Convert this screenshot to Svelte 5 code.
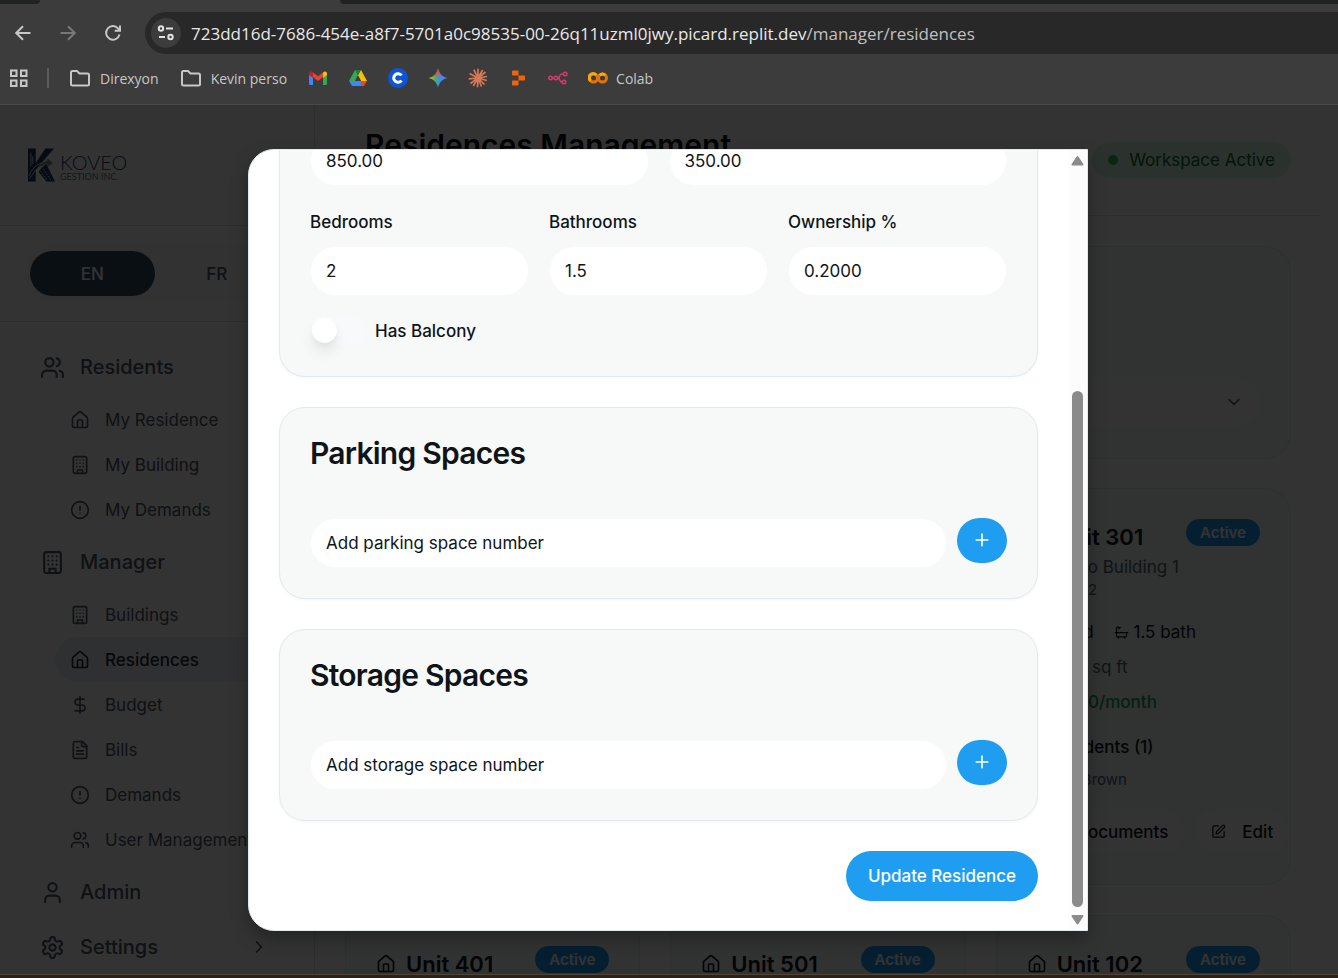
<script>
  const icons = {
    users: '<path d="M16 21v-2a4 4 0 0 0-4-4H6a4 4 0 0 0-4 4v2"/><circle cx="9" cy="7" r="4"/><path d="M22 21v-2a4 4 0 0 0-3-3.87"/><path d="M16 3.13a4 4 0 0 1 0 7.75"/>',
    house: '<path d="M15 21v-8a1 1 0 0 0-1-1h-4a1 1 0 0 0-1 1v8"/><path d="M3 10a2 2 0 0 1 .709-1.528l7-5.999a2 2 0 0 1 2.582 0l7 5.999A2 2 0 0 1 21 10v9a2 2 0 0 1-2 2H5a2 2 0 0 1-2-2z"/>',
    building: '<rect width="16" height="20" x="4" y="2" rx="2"/><path d="M9 22v-4h6v4M8 6h.01M16 6h.01M12 6h.01M12 10h.01M12 14h.01M16 10h.01M16 14h.01M8 10h.01M8 14h.01"/>',
    alert: '<circle cx="12" cy="12" r="10"/><path d="M12 8v4M12 16h.01"/>',
    dollar: '<path d="M12 2v20M17 5H9.5a3.5 3.5 0 0 0 0 7h5a3.5 3.5 0 0 1 0 7H6"/>',
    file: '<path d="M15 2H6a2 2 0 0 0-2 2v16a2 2 0 0 0 2 2h12a2 2 0 0 0 2-2V7Z"/><path d="M14 2v4a2 2 0 0 0 2 2h4M10 9H8M16 13H8M16 17H8"/>',
    user: '<path d="M19 21v-2a4 4 0 0 0-4-4H9a4 4 0 0 0-4 4v2"/><circle cx="12" cy="7" r="4"/>',
    settings: '<path d="M12.22 2h-.44a2 2 0 0 0-2 2v.18a2 2 0 0 1-1 1.73l-.43.25a2 2 0 0 1-2 0l-.15-.08a2 2 0 0 0-2.73.73l-.22.38a2 2 0 0 0 .73 2.73l.15.1a2 2 0 0 1 1 1.72v.51a2 2 0 0 1-1 1.74l-.15.09a2 2 0 0 0-.73 2.73l.22.38a2 2 0 0 0 2.73.73l.15-.08a2 2 0 0 1 2 0l.43.25a2 2 0 0 1 1 1.73V20a2 2 0 0 0 2 2h.44a2 2 0 0 0 2-2v-.18a2 2 0 0 1 1-1.73l.43-.25a2 2 0 0 1 2 0l.15.08a2 2 0 0 0 2.73-.73l.22-.39a2 2 0 0 0-.73-2.73l-.15-.08a2 2 0 0 1-1-1.74v-.5a2 2 0 0 1 1-1.74l.15-.09a2 2 0 0 0 .73-2.73l-.22-.38a2 2 0 0 0-2.73-.73l-.15.08a2 2 0 0 1-2 0l-.43-.25a2 2 0 0 1-1-1.73V4a2 2 0 0 0-2-2z"/><circle cx="12" cy="12" r="3"/>',
    right: '<path d="m9 18 6-6-6-6"/>',
    down: '<path d="m6 9 6 6 6-6"/>',
    bath: '<path d="M10 4 8 6M17 19v2M2 12h20M7 19v2M9 5 7.621 3.621A2.121 2.121 0 0 0 4 5v12a2 2 0 0 0 2 2h12a2 2 0 0 0 2-2v-5"/>',
    pen: '<path d="M12 3H5a2 2 0 0 0-2 2v14a2 2 0 0 0 2 2h14a2 2 0 0 0 2-2v-7"/><path d="M18.375 2.625a1 1 0 0 1 3 3l-9.013 9.014a2 2 0 0 1-.853.505l-2.873.84a.5.5 0 0 1-.62-.62l.84-2.873a2 2 0 0 1 .506-.852z"/>',
    plus: '<path d="M5 12h14M12 5v14"/>'
  };

  const menu = [
    { label: 'Residents', icon: 'users', items: [['My Residence', 'house'], ['My Building', 'building'], ['My Demands', 'alert']] },
    { label: 'Manager', icon: 'building', items: [['Buildings', 'building'], ['Residences', 'house'], ['Budget', 'dollar'], ['Bills', 'file'], ['Demands', 'alert'], ['User Management', 'users']] },
    { label: 'Admin', icon: 'user', items: [] },
    { label: 'Settings', icon: 'settings', items: [], arrow: true }
  ];

  const nextUnits = ['Unit 401', 'Unit 501', 'Unit 102'];

  const spaces = [
    { id: 'parking', title: 'Parking Spaces', hint: 'Add parking space number' },
    { id: 'storage', title: 'Storage Spaces', hint: 'Add storage space number' }
  ];

  const counts = [
    { id: 'bedrooms', label: 'Bedrooms', value: '2' },
    { id: 'bathrooms', label: 'Bathrooms', value: '1.5' },
    { id: 'ownership', label: 'Ownership %', value: '0.2000' }
  ];
</script>

{#snippet icon(name, size)}
  <svg class="icon {size}" viewBox="0 0 24 24" aria-hidden="true">{@html icons[name]}</svg>
{/snippet}

<div class="window">
  <header class="chrome">
    <div class="tabs"><span class="tab-before"></span><span class="tab-active"></span><span class="tab-after"></span></div>
    <div class="toolbar">
      <button class="nav-btn" aria-label="Back"><svg viewBox="0 0 20 20"><path d="M17.500 10H3.500M10 3.200 3.200 10l6.800 6.800" /></svg></button>
      <button class="nav-btn dim" aria-label="Forward"><svg viewBox="0 0 20 20"><path d="M2.500 10h14M10 3.200l6.800 6.800-6.800 6.800" /></svg></button>
      <button class="nav-btn" aria-label="Reload"><svg viewBox="0 0 20 20"><path d="M16.500 11.500A6.800 6.800 0 1 1 15.500 6L17 7.500M17 2.500v5.300h-5.300" /></svg></button>
      <div class="address">
        <button class="site-info" aria-label="Site information"><svg viewBox="0 0 20 20"><circle cx="5" cy="5.500" r="2.200" /><path d="M10 5.500h7M3 14h6" /><circle cx="14.500" cy="14" r="2.200" /></svg></button>
        <span class="url">723dd16d-7686-454e-a8f7-5701a0c98535-00-26q11uzml0jwy.picard.replit.dev<span class="path">/manager/residences</span></span>
      </div>
    </div>
    <nav class="bookmarks" aria-label="Bookmarks">
      <svg class="grid-icon" viewBox="0 0 20 20"><path d="M2 2.500h5.500V8H2zM12 2.500h5.500V8H12zM2 12.500h5.500V18H2zM12 12.500h5.500V18H12z" /></svg>
      <span class="sep"></span>
      <a class="mark folder" href="#direxyon"><svg viewBox="0 0 22 20"><path d="M2 4.500a1.500 1.500 0 0 1 1.500-1.500H8l2.500 2.500h8A1.500 1.500 0 0 1 20 7v9a1.500 1.500 0 0 1-1.500 1.500h-15A1.500 1.500 0 0 1 2 16z" /></svg>Direxyon</a>
      <a class="mark folder" href="#kevin"><svg viewBox="0 0 22 20"><path d="M2 4.500a1.500 1.500 0 0 1 1.500-1.500H8l2.500 2.500h8A1.500 1.500 0 0 1 20 7v9a1.500 1.500 0 0 1-1.500 1.500h-15A1.500 1.500 0 0 1 2 16z" /></svg>Kevin perso</a>
      <a class="mark" href="#mail" aria-label="Gmail"><svg viewBox="0 0 20 20"><path fill="#4285f4" d="M1 6v9.500A1.500 1.500 0 0 0 2.500 17H5V9z" /><path fill="#34a853" d="M15 9v8h2.500a1.500 1.500 0 0 0 1.500-1.500V6z" /><path fill="#ea4335" d="M5 4.500 10 8.300l5-3.800V9l-5 4-5-4z" /><path fill="#c5221f" d="M1 5.500V7l4 3V4.500l-.8-.6C2.800 2.800 1 3.700 1 5.500z" /><path fill="#fbbc04" d="M19 5.500V7l-4 3V4.500l.8-.6C17.200 2.800 19 3.700 19 5.500z" /></svg></a>
      <a class="mark" href="#drive" aria-label="Drive"><svg viewBox="0 0 20 20"><path fill="#34a853" d="M7 2h4l-1 5.500L7 13H1z" /><path fill="#188038" d="M7 2h6l-3 5.500z" /><path fill="#fbbc04" d="M13 2l6 11h-6l-3-5.500z" /><path fill="#4285f4" d="M4 18 1 13h12v5z" /><path fill="#ea4335" d="M13 13h6l-3 5h-3z" /><path fill="#3c3c3c" d="M10 7.500 7 13h6z" /></svg></a>
      <a class="mark" href="#c" aria-label="Coinbase"><svg viewBox="0 0 20 20"><circle cx="10" cy="10" r="10" fill="#0a55dc" /><path d="M13.500 7.500a4.300 4.300 0 1 0 0 5" fill="none" stroke="#fff" stroke-width="3" /></svg></a>
      <a class="mark" href="#gemini" aria-label="Gemini"><svg viewBox="0 0 20 20"><defs><linearGradient id="gem" x1="0" y1="0.500" x2="1" y2="0.500"><stop offset="0" stop-color="#fbbc04" /><stop offset="0.350" stop-color="#4cae6a" /><stop offset="0.600" stop-color="#3f8cf5" /><stop offset="1" stop-color="#3f8cf5" /></linearGradient><linearGradient id="gemtop" x1="0" y1="0" x2="0" y2="1"><stop offset="0.100" stop-color="#f0453a" /><stop offset="0.500" stop-color="#f0453a" stop-opacity="0" /></linearGradient></defs><path fill="url(#gem)" d="M10 .5C11.500 6 14 8.500 19.500 10 14 11.500 11.500 14 10 19.500 8.500 14 6 11.500 .5 10 6 8.500 8.500 6 10 .5z" /><path fill="url(#gemtop)" d="M10 .5C11.500 6 14 8.500 19.500 10 14 11.500 11.500 14 10 19.500 8.500 14 6 11.500 .5 10 6 8.500 8.500 6 10 .5z" /></svg></a>
      <a class="mark" href="#claude" aria-label="Claude"><svg viewBox="0 0 20 20"><path stroke="#d97757" stroke-width="1.700" fill="none" d="M10 10V.8M10 10l4.600-8M10 10l7.500-6M10 10l9-1.500M10 10l8.800 2.500M10 10l6.500 6.500M10 10l3.500 8.500M10 10l-.5 9.300M10 10l-4.700 8M10 10l-7.500 5.500M10 10l-9.300.8M10 10 1.600 5.500M10 10 5.800 1.700" /></svg></a>
      <a class="mark" href="#replit" aria-label="Replit"><svg viewBox="0 0 20 20"><path fill="#f26207" d="M4 3.500a1 1 0 0 1 1-1h4.500a1 1 0 0 1 1 1v4H5a1 1 0 0 1-1-1zM10.500 7.500H16a1 1 0 0 1 1 1v3a1 1 0 0 1-1 1h-5.500zM4 13.500a1 1 0 0 1 1-1h5.500v4a1 1 0 0 1-1 1H5a1 1 0 0 1-1-1z" /></svg></a>
      <a class="mark" href="#n8n" aria-label="n8n"><svg viewBox="0 0 20 20"><g fill="none" stroke="#d83a6c" stroke-width="1.400"><circle cx="2.500" cy="10" r="1.800" /><circle cx="8" cy="10" r="1.800" /><path d="M4.300 10h2M9.800 10c3 0 1-4 4-4h1.500M9.800 10c3 0 1 4 4 4h.5" /><circle cx="17.200" cy="6" r="1.800" /><circle cx="16" cy="14" r="1.800" /></g></svg></a>
      <a class="mark colab" href="#colab"><svg viewBox="0 0 20 20"><g fill="none" stroke-width="3"><circle cx="5.500" cy="10" r="4" stroke="#e8710a" /><circle cx="14.500" cy="10" r="4" stroke="#e8710a" /><path stroke="#f9ab00" d="M8.300 7.200a4 4 0 1 0-5.600 5.600M17.300 7.200a4 4 0 0 0-5.600 0" /></g></svg>Colab</a>
    </nav>
  </header>

  <div class="viewport">
    <div class="app">
      <aside class="sidebar">
        <div class="brand">
          <svg viewBox="0 0 28 34" aria-hidden="true">
            <path fill="#1c3a58" d="M0 0h8v15L18 0h9L15 14l-7 8v12H0z" />
            <path fill="#1c3a58" d="m14 20 5-4 9 18h-9l-8-10z" />
            <path fill="none" stroke="#dde3e8" d="M1 28c4-9 10-14 20-14M2 31c5-9 9-13 17-15M3 4v14M5 8v8" />
            <path fill="none" stroke="#dde3e8" stroke-dasharray="2 1" d="m13 23 7 10M16 21l8 12" />
            <path fill="#7e8f8a" d="m20 10 6 5-6 4v-3l-9 3c3-4 6-6 9-6z" />
          </svg>
          <div class="brand-text"><span class="name">KOVEO</span><span class="sub">GESTION INC.</span></div>
        </div>
        <div class="lang"><div class="lang-box"><button class="on">EN</button><button>FR</button></div></div>
        <nav class="menu" aria-label="Main">
          {#each menu as group}
            <a class="group" href="#{group.label}">{@render icon(group.icon, 'i25')}<span>{group.label}</span>{#if group.arrow}{@render icon('right', 'i20')}{/if}</a>
            {#if group.items.length}
              <div class="items">
                {#each group.items as [label, name]}
                  <a class="item" class:active={label === 'Residences'} href="#{label}">{@render icon(name, 'i20')}<span>{label}</span></a>
                {/each}
              </div>
            {/if}
          {/each}
        </nav>
      </aside>

      <main class="main">
        <div class="page-head">
          <h1>Residences Management</h1>
          <span class="status"><i></i>Workspace Active</span>
        </div>
        <div class="page-body">
          <section class="panel filter"><div class="picker">{@render icon('down', 'i20')}</div></section>
          <div class="units">
            <article class="panel unit full">
              <div class="unit-top"><h3>{@render icon('house', 'i20')}Unit 301</h3><span class="badge">Active</span></div>
              <p class="where">Demo Building 1</p>
              <p class="small floor">Floor 12</p>
              <p class="rooms"><span>2 bed</span><span>{@render icon('bath', 'i15')}1.5 bath</span></p>
              <p class="area">850 sq ft</p>
              <p class="rent">$350.00/month</p>
              <p class="people">Residents (1)</p>
              <p class="small tenant">Bob Brown</p>
              <div class="actions"><button>Documents</button><button>{@render icon('pen', 'i15')}Edit</button></div>
            </article>
            {#each nextUnits as unit}
              <article class="panel unit">
                <div class="unit-top"><h3>{@render icon('house', 'i20')}{unit}</h3><span class="badge">Active</span></div>
              </article>
            {/each}
          </div>
        </div>
      </main>
    </div>

    <div class="overlay">
      <div class="dialog" role="dialog" aria-label="Edit residence">
        <form class="form" onsubmit={(e) => e.preventDefault()}>
          <section class="card first">
            <div class="two">
              <input type="text" aria-label="Square footage" value="850.00" />
              <input type="text" aria-label="Monthly fees" value="350.00" />
            </div>
            <div class="three">
              {#each counts as field}
                <div class="field"><label for={field.id}>{field.label}</label><input id={field.id} type="text" value={field.value} /></div>
              {/each}
            </div>
            <div class="toggle"><input id="balcony" type="checkbox" role="switch" aria-checked="false" /><label for="balcony">Has Balcony</label></div>
          </section>
          {#each spaces as space}
            <section class="card">
              <h2>{space.title}</h2>
              <div class="add"><input type="text" aria-label={space.title} placeholder={space.hint} /><button type="button" aria-label="Add {space.id} space">{@render icon('plus', 'i20')}</button></div>
            </section>
          {/each}
          <button class="submit" type="submit">Update Residence</button>
        </form>
        <div class="scroll" aria-hidden="true">
          <svg viewBox="0 0 19 20"><path d="M9.500 7 14.500 14.500h-10z" /></svg>
          <div class="track"><span></span></div>
          <svg viewBox="0 0 19 20"><path d="M9.500 13.500 14.500 6h-10z" /></svg>
        </div>
      </div>
    </div>
  </div>
  <footer class="edge"></footer>
</div>

<style>
  :global(body) { margin: 0; }
  .window, .window :global(*) { box-sizing: border-box; }
  .window { height: 100vh; display: flex; flex-direction: column; overflow: hidden; background: #333; font-family: Inter, "Liberation Sans", sans-serif; font-size: 17px; color: #0f1419; }
  button, input { font: inherit; color: inherit; border: 0; margin: 0; }
  button { cursor: pointer; padding: 0; background: none; }
  a { color: inherit; text-decoration: none; }
  h1, h2, h3, p { margin: 0; }
  .icon { fill: none; stroke: currentColor; stroke-width: 2; stroke-linecap: round; stroke-linejoin: round; flex: none; }
  .i25 { width: 25px; height: 25px; }
  .i20 { width: 20px; height: 20px; }
  .i15 { width: 15px; height: 15px; }

  .chrome { height: 105px; flex: none; background: #3c3c3c; border-bottom: 1px solid #4a4a4a; font-family: "Open Sans", "Noto Sans", sans-serif; color: #c7c7c7; }
  .tabs { display: flex; height: 4px; }
  .tab-before { width: 40px; background: #1f2221; border-radius: 0 0 8px 0; }
  .tab-active { width: 300px; }
  .tab-after { flex: 1; background: #1f2221; border-radius: 0 0 0 8px; }
  .toolbar { display: flex; align-items: center; height: 58px; padding-left: 13px; }
  .nav-btn { width: 21px; height: 20px; margin-right: 24px; }
  .nav-btn svg { width: 20px; height: 20px; display: block; fill: none; stroke: #c7c7c7; stroke-width: 2; }
  .nav-btn.dim svg { stroke: #777; }
  .address { display: flex; flex: 1; align-items: center; gap: 10px; height: 42px; margin-left: -3px; padding-left: 6px; background: #282828; border-radius: 21px 0 0 21px; white-space: nowrap; }
  .site-info { width: 30px; height: 30px; border-radius: 50%; background: #3c3c3c; display: grid; place-items: center; }
  .site-info svg { width: 20px; height: 20px; fill: none; stroke: #e3e3e3; stroke-width: 2; }
  .url { font-size: 17px; color: #e8e8e8; }
  .path { color: #c0c0c0; }
  .bookmarks { display: flex; align-items: center; height: 32px; padding-left: 9px; font-size: 14px; gap: 20px; }
  .grid-icon { width: 20px; height: 20px; fill: none; stroke: #c7c7c7; stroke-width: 2; }
  .sep { width: 2px; height: 20px; background: #5c5c5c; margin-left: -2px; }
  .mark { display: flex; align-items: center; gap: 8px; white-space: nowrap; }
  .mark svg { width: 20px; height: 20px; display: block; }
  .folder { gap: 9px; margin-right: 1px; }
  .folder svg { width: 22px; fill: none; stroke: #c7c7c7; stroke-width: 2; }

  .viewport { flex: 1; min-height: 0; position: relative; overflow: hidden; background: #fff; }
  .app { display: flex; height: 100%; overflow: hidden; }
  .sidebar { width: 315px; flex: none; border-right: 1px solid #dde2e5; white-space: nowrap; color: #4b5563; }
  .brand { height: 121px; display: flex; align-items: center; gap: 5px; padding: 0 28px; border-bottom: 1px solid #dde2e5; }
  .brand svg { width: 27px; height: 34px; }
  .brand-text { display: flex; flex-direction: column; padding-top: 3px; font-family: Lato, sans-serif; color: #1c3a58; }
  .name { font-size: 20px; line-height: 20px; font-weight: 300; }
  .sub { font-size: 9px; line-height: 10px; color: #5f7484; }
  .lang { padding: 20px 30px 20px 25px; border-bottom: 1px solid #dde2e5; }
  .lang-box { display: flex; padding: 5px; border-radius: 28px; background: #f7f8f8; }
  .lang-box button { flex: 1; height: 45px; border-radius: 23px; font-weight: 500; }
  .lang-box .on { background: #334b64; color: #fff; }
  .menu { padding: 20px 25px; }
  .group { display: flex; align-items: center; gap: 15px; height: 50px; padding: 0 20px 0 15px; font-size: 20px; font-weight: 500; margin-bottom: 5px; }
  .group span { flex: 1; }
  .items { padding-left: 30px; margin-bottom: 5px; }
  .item { display: flex; align-items: center; gap: 15px; height: 45px; padding-left: 15px; border-radius: 23px; }
  .item.active { background: #ebf1f7; color: #1e2a35; font-weight: 500; }

  .main { flex: 1; min-width: 0; margin-right: 17px; }
  .page-head { display: flex; justify-content: space-between; align-items: center; height: 111px; padding: 0 30px 0 50px; border-bottom: 1px solid #dde2e5; }
  .page-head h1 { font-size: 30px; line-height: 38px; font-weight: 600; margin-bottom: 30px; }
  .status { display: flex; align-items: center; gap: 11px; height: 36px; padding: 0 16px; border-radius: 18px; background: #d5f5e0; color: #166534; }
  .status i { width: 10px; height: 10px; border-radius: 50%; background: #22c55e; }
  .page-body { padding: 30px; }
  .panel { background: #f3f8f7; border: 1px solid #e4e8ea; border-radius: 26px; }
  .filter { height: 213px; padding: 130px 30px 30px; }
  .picker { display: flex; align-items: center; justify-content: flex-end; height: 50px; padding: 0 16px; border-radius: 25px; background: #fcfdfd; color: #4b5563; }
  .units { display: grid; grid-template-columns: repeat(3, 1fr); gap: 30px; margin-top: 29px; }
  .unit { height: 397px; padding: 30px; min-width: 0; white-space: nowrap; }
  .full { grid-column: 3; }
  .unit-top { display: flex; justify-content: space-between; align-items: flex-start; }
  .unit-top h3 { display: flex; align-items: center; gap: 10px; font-size: 22px; line-height: 36px; font-weight: 600; }
  .badge { height: 27px; padding: 0 14px; border-radius: 14px; background: #1e9df1; color: #fff; font-size: 15px; line-height: 27px; font-weight: 600; }
  .where { line-height: 25px; color: #536471; padding-left: 24px; }
  .small { font-size: 15px; line-height: 20px; color: #536471; }
  .rooms { display: flex; gap: 20px; margin-top: 20px; line-height: 25px; padding-left: 21px; }
  .rooms span { display: flex; align-items: center; gap: 5px; }
  .floor { padding-left: 15px; }
  .area { margin-top: 10px; line-height: 25px; padding-left: 29px; color: #536471; }
  .rent { margin-top: 10px; line-height: 25px; padding-left: 3px; color: #16a34a; font-weight: 500; }
  .people { margin-top: 20px; line-height: 25px; font-weight: 500; padding-left: 23px; }
  .tenant { margin-top: 10px; padding-left: 23px; }
  .actions { display: flex; gap: 11px; margin-top: 19px; }
  .actions button { display: flex; align-items: center; gap: 16px; height: 45px; padding: 0 16px; border-radius: 23px; background: #fcfdfd; font-weight: 500; }
  .actions button:first-child { padding-left: 49px; }

  .overlay { position: absolute; inset: 0; display: grid; place-items: center; grid-template-rows: 100%; padding: 1px 2px 0 0; background: rgba(0, 0, 0, 0.8); }
  .dialog { display: flex; width: 100%; max-width: 840px; height: 90%; overflow: hidden; background: #fff; border: 1px solid #e1eaef; border-radius: 26px 0 0 26px; box-shadow: 0 8px 18px rgba(0, 0, 0, 0.3); }
  .form { flex: 1; min-width: 0; display: flex; flex-direction: column; justify-content: flex-end; gap: 30px; padding: 0 30px 29px; }
  .card { flex: none; padding: 30px; background: #f7f8f8; border: 1px solid #e1eaef; border-radius: 26px; box-shadow: 0 1px 3px rgba(0, 0, 0, 0.04); }
  .card h2 { font-size: 30px; line-height: 30px; font-weight: 600; letter-spacing: -0.025em; margin-bottom: 50px; }
  .first { display: flex; flex-direction: column; gap: 20px; border-top: 0; border-radius: 0 0 26px 26px; }
  .two, .three { display: grid; grid-template-columns: repeat(2, 1fr); gap: 20px; }
  .three { grid-template-columns: repeat(3, 1fr); }
  .card input[type="text"] { width: 100%; min-width: 0; height: 50px; padding: 0 15px; background: #fff; border: 1px solid #f7f9fa; border-radius: 25px; outline: 0; }
  input::placeholder { color: #0f1419; opacity: 1; }
  .field { display: flex; flex-direction: column; gap: 8px; }
  label { font-weight: 500; line-height: 32px; }
  .toggle { display: flex; align-items: center; gap: 10px; height: 30px; }
  .toggle input { appearance: none; display: flex; align-items: center; width: 55px; height: 30px; padding: 0 2px; border-radius: 15px; background: #f7f9fa; }
  .toggle input::before { content: ""; width: 25px; height: 25px; border-radius: 50%; background: #fff; box-shadow: 0 10px 14px rgba(0, 0, 0, 0.07), 0 3px 5px rgba(0, 0, 0, 0.04); }
  .add { display: flex; align-items: flex-start; gap: 10px; }
  .add button { display: grid; place-items: center; flex: none; width: 50px; height: 45px; border-radius: 23px; background: #1e9df1; color: #fff; }
  .submit { flex: none; align-self: flex-end; height: 50px; padding: 0 22px; border-radius: 25px; background: #1e9df1; color: #fff; font-weight: 500; }
  .scroll { display: flex; flex-direction: column; width: 19px; flex: none; background: #fcfcfc; }
  .scroll svg { width: 19px; height: 20px; fill: #8b8b8b; stroke: #8b8b8b; stroke-width: 2; stroke-linejoin: round; }
  .track { flex: 1; display: flex; flex-direction: column; justify-content: flex-end; align-items: center; padding-bottom: 3px; }
  .track span { width: 11px; height: 70%; border-radius: 6px; background: #8b8b8b; }
  .edge { height: 4px; flex: none; background: #2b2119; border-top: 1px solid #4f4436; }
</style>
